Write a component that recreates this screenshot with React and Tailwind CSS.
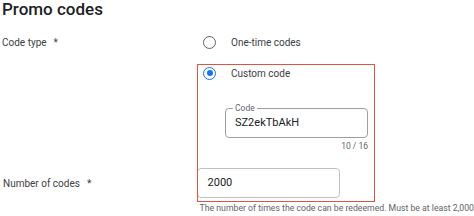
function Radio({ checked }) {
  return (
    <span
      className={
        checked
          ? "flex h-[13px] w-[13px] items-center justify-center rounded-full border-[1.5px] border-[#1a73e8]"
          : "flex h-[13px] w-[13px] items-center justify-center rounded-full border-[1.5px] border-[#5f6368]"
      }
    >
      {checked && <span className="h-[6px] w-[6px] rounded-full bg-[#1a73e8]" />}
    </span>
  );
}

function Option({ checked, label, className }) {
  return (
    <label className={"flex h-[20px] items-center pl-[3px] " + (className || "")}>
      <Radio checked={checked} />
      <span className="ml-[15px] text-[10px] text-[#3c4043]">{label}</span>
    </label>
  );
}

export default function App() {
  return (
    <div className="relative h-[216px] w-[474px] overflow-hidden bg-white font-['Roboto',sans-serif] text-[#3c4043]">
      <h1 className="-mt-px pl-[2px] text-[17px] leading-[20px] font-medium text-[#202124]">
        Promo codes
      </h1>

      <div className="mt-[13px] flex">
        <div className="flex h-[20px] w-[200px] items-center pl-[2px] text-[10px]">
          Code type <span className="ml-[7px]">*</span>
        </div>
        <div className="flex flex-col">
          <Option label="One-time codes" />
          <Option checked label="Custom code" className="mt-[11px]" />

          <div className="relative mt-[25px] ml-[25px] flex h-[30px] w-[143px] items-center rounded-[4px] border border-[#9aa0a6] pl-[9px]">
            <span className="absolute -top-[6px] left-[7px] bg-white px-[2px] text-[8.5px] leading-[10px] text-[#5f6368]">
              Code
            </span>
            <span className="text-[11px] text-[#202124]">SZ2ekTbAkH</span>
          </div>
          <div className="mt-[2px] ml-[25px] h-[12px] w-[143px] text-right text-[8.5px] leading-[12px] text-[#5f6368]">
            10 / 16
          </div>
        </div>
      </div>

      <div className="mt-[16px] flex">
        <div className="flex h-[30px] w-[200px] items-center pl-[3px] text-[10px]">
          Number of codes <span className="ml-[7px]">*</span>
        </div>
        <div className="flex flex-col">
          <div className="flex h-[30px] w-[143px] items-center rounded-[4px] border border-[#bdc1c6] pl-[10px]">
            <span className="text-[11px] text-[#202124]">2000</span>
          </div>
          <p className="mt-[5px] pl-[3px] whitespace-nowrap text-[8.7px] leading-[11px] text-[#5f6368]">
            The number of times the code can be redeemed. Must be at least 2,000
          </p>
        </div>
      </div>

      <div className="pointer-events-none absolute top-[64px] left-[197px] h-[138px] w-[178px] border-[1.5px] border-[#e0533d]" />
    </div>
  );
}
